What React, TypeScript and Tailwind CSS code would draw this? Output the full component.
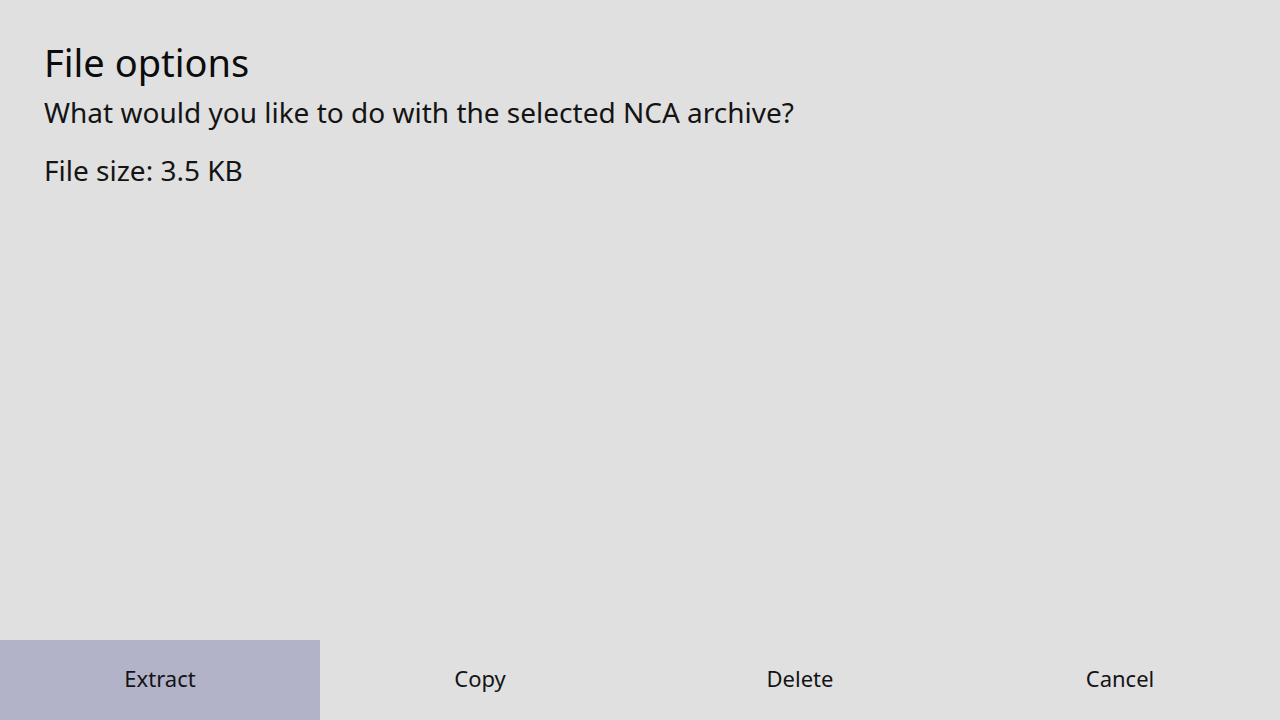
import React from 'react';

const actions = ['Extract', 'Copy', 'Delete', 'Cancel'];

export default function App() {
  const selected = 0;

  return (
    <div
      className="w-[1280px] h-[720px] bg-[#e0e0e0] flex flex-col text-[#141414]"
      style={{ fontFamily: '"Noto Sans", "Open Sans", sans-serif' }}
    >
      <div className="flex-1 px-[44px] pt-[36px]">
        <h1 className="text-[38px] leading-[52px] text-[#0c0c0c]">File options</h1>
        <p className="text-[28px] leading-[44px] mt-[2px]">
          What would you like to do with the selected NCA archive?
        </p>
        <p className="text-[28px] leading-[44px] mt-[14px]">File size: 3.5 KB</p>
      </div>

      <div className="grid grid-cols-4 h-[80px]">
        {actions.map((a, i) => (
          <div
            key={a}
            className={`flex items-center justify-center pb-[4px] text-[22px] ${
              i === selected ? 'bg-[#b2b3c9]' : ''
            }`}
          >
            {a}
          </div>
        ))}
      </div>
    </div>
  );
}
